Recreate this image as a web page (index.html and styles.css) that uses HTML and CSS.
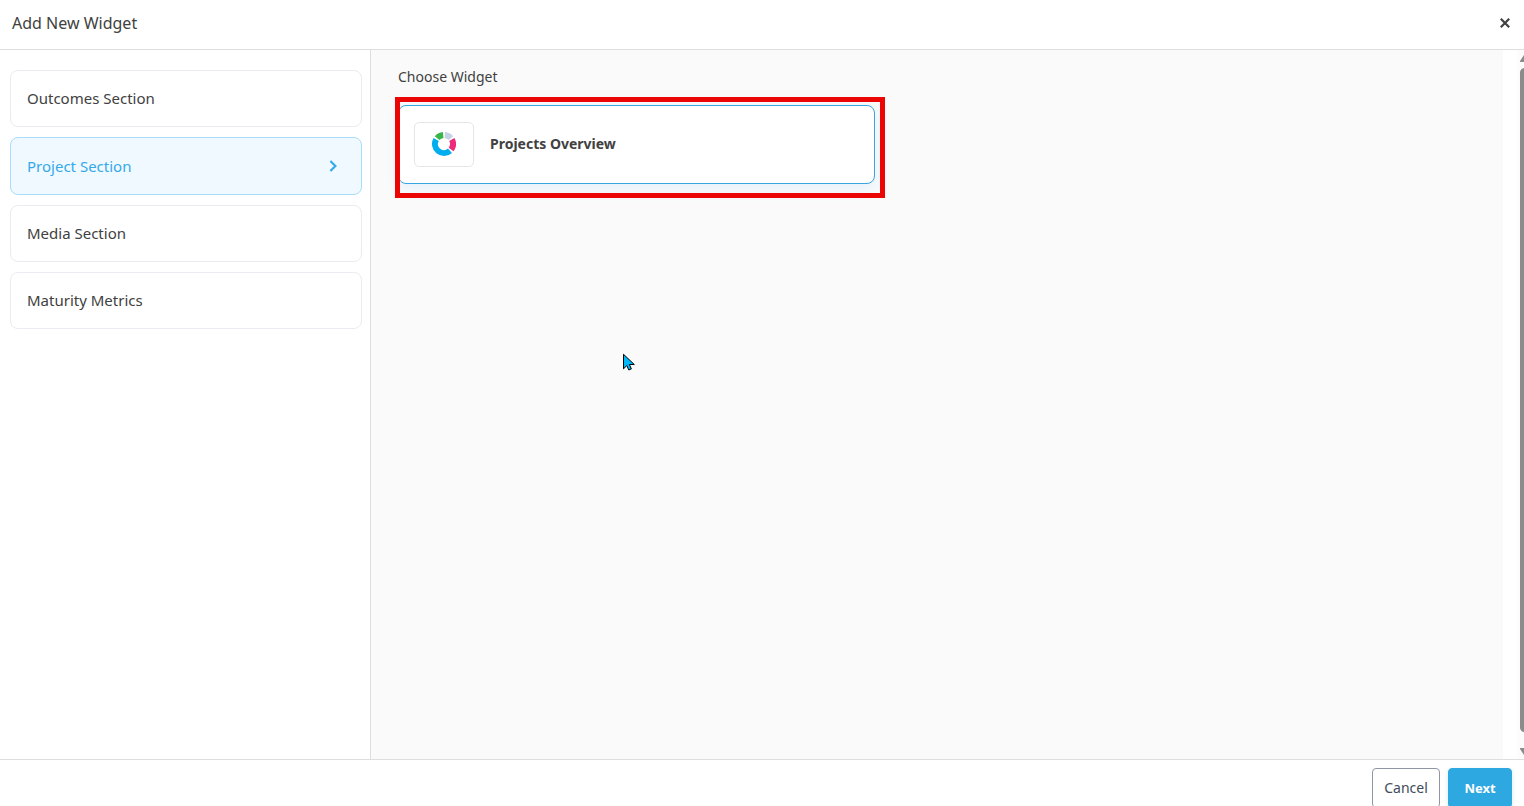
FILE: index.html
```html
<!DOCTYPE html>
<html lang="en">
<head>
<meta charset="utf-8">
<title>Add New Widget</title>
<link rel="stylesheet" href="styles.css">
</head>
<body>
<div class="dialog" role="dialog" aria-labelledby="dialog-title">
  <header class="dialog-header">
    <h1 class="dialog-title" id="dialog-title">Add New Widget</h1>
    <button class="close" type="button" aria-label="Close">
      <svg width="10" height="10" viewBox="0 0 10 10" fill="none" stroke="currentColor" stroke-width="2.2"><path d="M.8.8l8.4 8.4M9.2.8L.8 9.2"/></svg>
    </button>
  </header>
  <div class="dialog-body">
    <nav class="sections" aria-label="Sections">
      <button class="section" type="button">Outcomes Section</button>
      <button class="section section-active" type="button">Project Section
        <svg width="8" height="12" viewBox="0 0 8 12" fill="none" stroke="currentColor" stroke-width="2.2"><path d="M1.4 1l5 5-5 5"/></svg>
      </button>
      <button class="section" type="button">Media Section</button>
      <button class="section" type="button">Maturity Metrics</button>
    </nav>
    <main class="chooser">
      <h2 class="chooser-title">Choose Widget</h2>
      <div class="choice">
        <button class="widget" type="button">
          <span class="widget-icon">
            <svg width="24" height="24" viewBox="0 0 24 24" fill="none" stroke-width="6">
              <path stroke="#39b54a" d="M5.1 6.2A9 9 0 0 1 11.2 3"/>
              <path stroke="#c5d3e3" d="M12.8 3A9 9 0 0 1 18.9 6.2"/>
              <path stroke="#ee2a7b" d="M19.8 7.5A9 9 0 0 1 19.1 17.5"/>
              <path stroke="#00aeef" d="M4.2 7.5A9 9 0 0 0 18 18.7"/>
            </svg>
          </span>
          <span class="widget-name">Projects Overview</span>
        </button>
        <div class="highlight"></div>
      </div>
    </main>
    <div class="scrollbar" aria-hidden="true">
      <svg class="arrow" width="10" height="8" viewBox="0 0 10 8"><path fill="#8b8b8b" d="M4 1h2l4 6v1H0V7z"/></svg>
      <div class="thumb"></div>
      <svg class="arrow" width="10" height="8" viewBox="0 0 10 8"><path fill="#8b8b8b" d="M0 0h10v1L6 7H4L0 1z"/></svg>
    </div>
  </div>
  <footer class="dialog-footer">
    <button class="btn btn-cancel" type="button">Cancel</button>
    <button class="btn btn-next" type="button">Next</button>
  </footer>
  <svg class="pointer" width="13" height="19" viewBox="0 0 13 19" aria-hidden="true"><path fill="#00b7f7" stroke="#000" d="M.5 1.3v14.5l3.3-3.2 2 4.4 2.6-1.1-2-4.4h4.9z"/></svg>
</div>
</body>
</html>
```
FILE: styles.css
```css
* { box-sizing: border-box; }

body {
  margin: 0;
  font-family: "Noto Sans", "Open Sans", sans-serif;
  font-size: 14px;
  line-height: 20px;
  color: #414141;
  background: #fff;
}

button {
  font: inherit;
  color: inherit;
  cursor: pointer;
}

.dialog {
  position: relative;
  display: flex;
  flex-direction: column;
  height: 100vh;
  overflow: hidden;
}

.dialog-header {
  display: flex;
  align-items: center;
  justify-content: space-between;
  padding: 11px 14px 14px 12px;
  border-bottom: 1px solid #dedede;
}

.dialog-title {
  margin: 0;
  font-size: 16px;
  line-height: 24px;
  font-weight: 400;
}

.close {
  display: flex;
  padding: 0;
  border: 0;
  background: none;
}

.dialog-body {
  display: flex;
  flex: 1;
  min-height: 0;
}

.sections {
  display: flex;
  flex-direction: column;
  flex: 0 0 371px;
  gap: 10px;
  padding: 20px 8px 20px 10px;
  border-right: 1px solid #dedede;
}

.section {
  display: flex;
  align-items: center;
  justify-content: space-between;
  min-height: 57px;
  padding: 0 24px 2px 16px;
  border: 1px solid #ebebf2;
  border-radius: 8px;
  background: #fff;
  font-size: 15px;
  text-align: left;
}

.section-active {
  min-height: 58px;
  padding-bottom: 1px;
  border-color: #a9dcf8;
  background: #f0f9ff;
  color: #36a9e9;
}

.chooser {
  flex: 1;
  padding: 17px 24px 20px 27px;
  background: #fafafa;
}

.chooser-title {
  margin: 0 0 18px;
  font-size: 14px;
  line-height: 20px;
  font-weight: 400;
}

.choice {
  position: relative;
  width: 45%;
  max-width: 477px;
}

.widget {
  display: flex;
  align-items: center;
  gap: 16px;
  width: 100%;
  padding: 16px 15px;
  border: 1px solid #36a5e0;
  border-radius: 8px;
  background: #fff;
  box-shadow: 0 4px 16px #e3f1fb;
  font-weight: 700;
  text-align: left;
}

.widget-icon {
  display: flex;
  align-items: center;
  justify-content: center;
  width: 60px;
  height: 45px;
  padding-bottom: 1px;
  border: 1px solid #e6e6e6;
  border-radius: 5px;
}

.widget-name { padding-bottom: 1px; }

.highlight {
  position: absolute;
  inset: -8px -10px -14px -3px;
  border: 5px solid #eb0505;
  pointer-events: none;
}

.scrollbar {
  display: flex;
  flex-direction: column;
  flex: 0 0 7px;
  margin-left: 14px;
  padding: 4px 0 3px 3px;
  overflow: hidden;
  background: #fcfcfc;
}

.arrow { flex: none; }

.thumb {
  flex: 1;
  width: 9px;
  margin: 6px 0 16px;
  border-radius: 5px;
  background: #8b8b8b;
}

.dialog-footer {
  display: flex;
  align-items: flex-start;
  justify-content: flex-end;
  gap: 8px;
  flex: 0 0 47px;
  min-height: 0;
  padding: 8px 12px 0;
  border-top: 1px solid #dedede;
}

.btn {
  height: 40px;
  padding: 0;
  border: 1px solid #8f97a5;
  border-radius: 4px;
  font-size: 13px;
}

.btn-cancel {
  width: 68px;
  background: #fff;
  color: #414b5a;
  font-size: 14px;
}

.btn-next {
  width: 64px;
  border-color: #2da8e1;
  background: #2da8e1;
  box-shadow: 0 2px 5px #d9eaf3;
  color: #fff;
  font-weight: 700;
}

.pointer {
  position: absolute;
  left: 623px;
  top: 353px;
}
```
